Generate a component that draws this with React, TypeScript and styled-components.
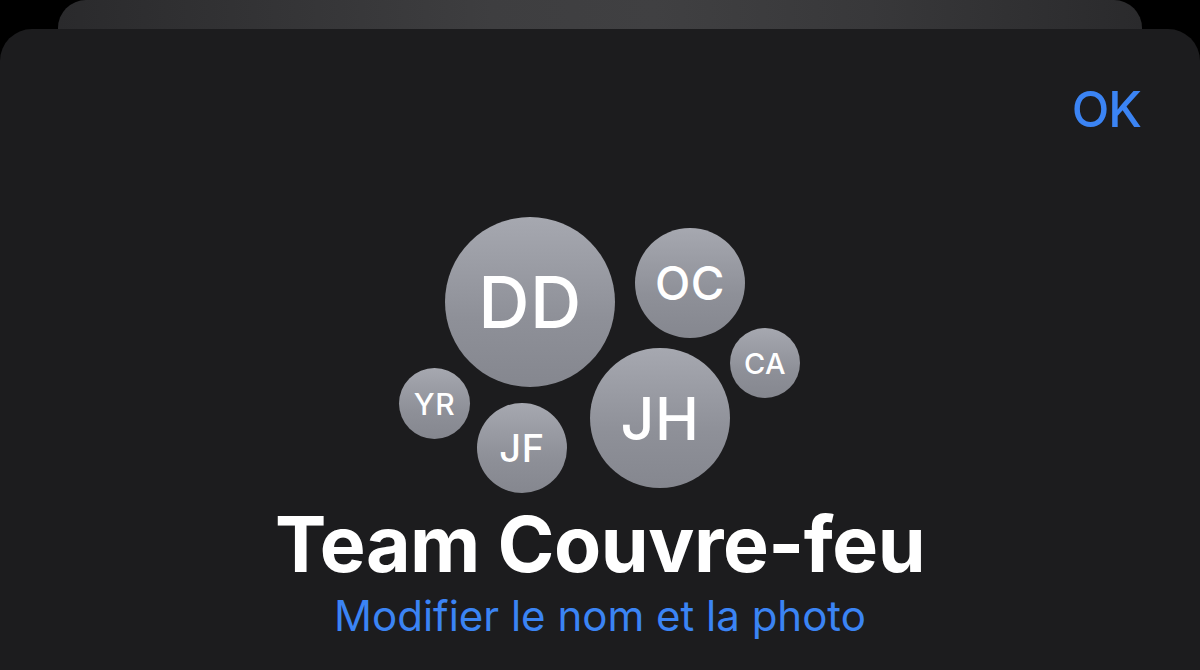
import React from "react";
import styled, { createGlobalStyle } from "styled-components";

const Global = createGlobalStyle`
  html, body { margin: 0; padding: 0; background: #000; }
  body { font-family: Inter, "Noto Sans", "Liberation Sans", sans-serif; -webkit-font-smoothing: antialiased; }
`;

const Page = styled.div`
  width: 1200px;
  height: 670px;
  overflow: hidden;
  background: #000;
  display: flex;
  flex-direction: column;
`;

const BackCard = styled.div`
  flex: 0 0 29px;
  margin: 0 58px;
  border-radius: 28px 28px 0 0;
  background: linear-gradient(
    90deg,
    #2a2a2c 0%,
    #343436 20%,
    #3e3e40 40%,
    #404042 55%,
    #38383a 75%,
    #2a2a2c 100%
  );
`;

const Sheet = styled.div`
  flex: 1;
  background: #1c1c1e;
  border-radius: 32px 32px 0 0;
  display: flex;
  flex-direction: column;
  align-items: center;
`;

const Header = styled.div`
  align-self: stretch;
  display: flex;
  justify-content: flex-end;
  padding: 56px 59px 0 0;
`;

const OkButton = styled.span`
  color: #3b84f4;
  font-size: 49px;
  font-weight: 500;
  line-height: 1;
  letter-spacing: -1px;
`;

const Cluster = styled.div`
  position: relative;
  width: 410px;
  height: 282px;
  margin-top: 80px;
`;

const Bubble = styled.div<{ $d: number; $x: number; $y: number }>`
  position: absolute;
  left: ${(p) => p.$x}px;
  top: ${(p) => p.$y}px;
  width: ${(p) => p.$d}px;
  height: ${(p) => p.$d}px;
  border-radius: 50%;
  background: linear-gradient(180deg, #a6a8b0 0%, #8e9098 60%, #85878f 100%);
  display: flex;
  align-items: center;
  justify-content: center;
  color: #fff;
  font-weight: 500;
  font-size: ${(p) => Math.round(p.$d * 0.42)}px;
  letter-spacing: 0.5px;
  line-height: 1;
`;

const Title = styled.h1`
  margin: 10px 0 0;
  color: #fff;
  font-size: 77px;
  font-weight: 700;
  line-height: 1;
  letter-spacing: -0.5px;
`;

const EditLink = styled.span`
  margin-top: 12px;
  color: #3b84f4;
  font-size: 42px;
  font-weight: 400;
  line-height: 1;
`;

const people = [
  { id: "DD", d: 170, x: 50, y: 3 },
  { id: "OC", d: 110, x: 240, y: 14 },
  { id: "CA", d: 70, x: 335, y: 114 },
  { id: "JH", d: 140, x: 195, y: 134 },
  { id: "YR", d: 71, x: 4, y: 154 },
  { id: "JF", d: 90, x: 82, y: 189 },
];

export default function App() {
  return (
    <>
      <Global />
      <Page>
        <BackCard />
        <Sheet>
          <Header>
            <OkButton>OK</OkButton>
          </Header>
          <Cluster>
            {people.map((p) => (
              <Bubble key={p.id} $d={p.d} $x={p.x} $y={p.y}>
                {p.id}
              </Bubble>
            ))}
          </Cluster>
          <Title>Team Couvre-feu</Title>
          <EditLink>Modifier le nom et la photo</EditLink>
        </Sheet>
      </Page>
    </>
  );
}
